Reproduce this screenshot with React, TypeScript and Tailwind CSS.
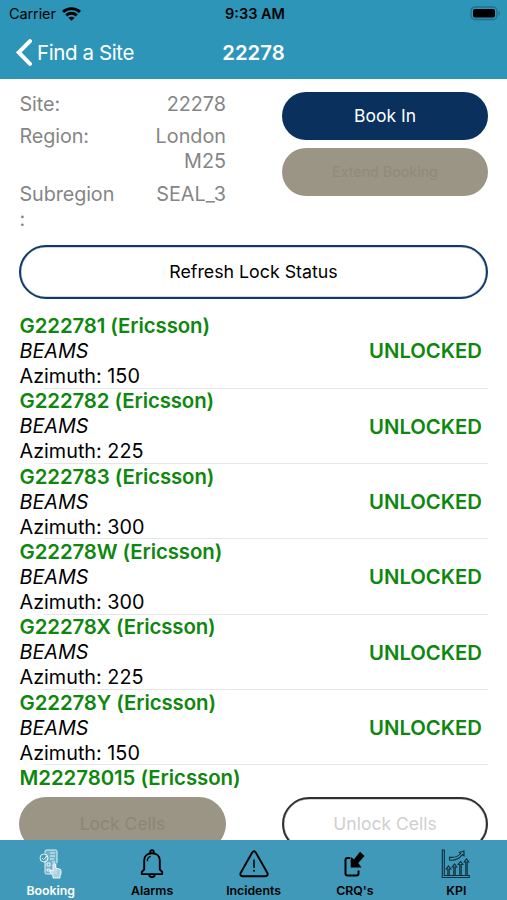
import { ReactNode } from "react";

interface Cell {
  id: string;
  azimuth: number;
}

interface TabProps {
  label: string;
  active?: boolean;
  children: ReactNode;
}

const CELLS: Cell[] = [
  { id: "G222781", azimuth: 150 },
  { id: "G222782", azimuth: 225 },
  { id: "G222783", azimuth: 300 },
  { id: "G22278W", azimuth: 300 },
  { id: "G22278X", azimuth: 225 },
  { id: "G22278Y", azimuth: 150 },
];

function StatusBar() {
  return (
    <div className="grid h-[27px] grid-cols-3 items-center pl-[9px] pr-[6px] text-black">
      <div className="flex items-center gap-[6px]">
        <span className="text-[14.5px] tracking-[-0.1px]">Carrier</span>
        <svg width="19" height="14" viewBox="0 0 19 14" fill="none" stroke="currentColor" strokeWidth="2.9">
          <path d="M1 4.9C5.7.5 13.3.5 18 4.9" />
          <path d="M4.2 8.4c3-2.8 7.6-2.8 10.6 0" />
          <path d="M9.5 13.7 6.4 10.8c1.7-1.5 4.5-1.5 6.2 0Z" fill="currentColor" stroke="none" />
        </svg>
      </div>
      <span className="text-center text-[14.5px] font-semibold">9:33 AM</span>
      <svg className="justify-self-end" width="31" height="15" viewBox="0 0 31 15">
        <rect x="1" y="1" width="26" height="12.5" rx="4" fill="none" stroke="#217087" strokeWidth="1.3" />
        <rect x="3" y="3" width="22" height="8.5" rx="2" />
        <path d="M28.6 5v4.5c2-.7 2-3.8 0-4.5Z" fill="#217087" />
      </svg>
    </div>
  );
}

function Header() {
  return (
    <header className="h-[79px] shrink-0 bg-[#2d95b8]">
      <StatusBar />
      <div className="grid h-[51px] grid-cols-3 items-center text-white">
        <button className="flex items-center gap-[5px] whitespace-nowrap pl-4 text-[20.5px] tracking-[-0.4px]">
          <svg width="16" height="27" viewBox="0 0 16 27" fill="none" stroke="currentColor" strokeWidth="4">
            <path d="M14 2.2 2.8 13.4 14 24.8" strokeLinecap="round" />
          </svg>
          <span className="pt-px">Find a Site</span>
        </button>
        <h1 className="pt-px text-center text-[20.3px] font-semibold">22278</h1>
      </div>
    </header>
  );
}

function InfoRow({ label, value }: { label: string; value: string }) {
  return (
    <div className="mb-[7.5px] flex justify-between leading-[24.9px]">
      <span className="w-[98px] break-words tracking-[-0.1px]">{label}</span>
      <span className="w-[80px] text-right">{value}</span>
    </div>
  );
}

function CellRow({ cell }: { cell: Cell }) {
  return (
    <div className="flex h-[75.35px] flex-col">
      <div className="flex h-[74.35px] shrink-0 items-center justify-between pl-[0.5px] pr-[6px] pt-px leading-[25.1px]">
        <div>
          <div className="pb-px text-[20.4px] font-semibold tracking-[-0.1px] text-[#0f870f]">{cell.id} (Ericsson)</div>
          <div className="italic">BEAMS</div>
          <div>Azimuth: {cell.azimuth}</div>
        </div>
        <span className="text-[20.3px] font-semibold text-[#0f870f]">UNLOCKED</span>
      </div>
      <div className="ml-[25px] h-px shrink-0 bg-[#e6e6e6]" />
    </div>
  );
}

function Tab({ label, active, children }: TabProps) {
  return (
    <button className={`flex flex-1 flex-col items-center pt-2 ${active ? "text-white" : "text-black"}`}>
      <span className="flex h-8 items-center justify-center">{children}</span>
      <span className="mt-[3px] text-[12.3px] font-semibold leading-4">{label}</span>
    </button>
  );
}

function BookingIcon() {
  return (
    <svg width="24" height="30" viewBox="0 0 24 30" fill="none" stroke="currentColor" strokeWidth="1" strokeOpacity=".85">
      <path d="M6 4V2.5Q6 1 7.5 1h9Q18 1 18 2.5V14M6 12v11.5Q6 25 7.5 25H12" />
      <path d="M6 4V2.5Q6 1 7.5 1h9Q18 1 18 2.5V25H6V12Z" fill="currentColor" fillOpacity=".25" stroke="none" />
      <circle cx="5" cy="9" r="4" />
      <path d="m3 9 1.5 1.7L8 7M11 4h5M11 7h5M11 10h4M8 14h3v3H8zM8 20h3v2H8zM13 13h3" />
      <path d="M14 22v-6q0-1.5 1.3-1.5t1.2 1.5v3l4.5 1.2q1 .3 1 1.5V25l-1 2v2h-7v-2l-3-4 .7-2Z" fill="currentColor" fillOpacity=".55" />
    </svg>
  );
}

function BellIcon() {
  return (
    <svg width="24" height="30" viewBox="0 0 24 30" fill="none" stroke="currentColor" strokeWidth="1.9" strokeLinejoin="round">
      <path d="M10.3 4.2V2.8a1.7 1.7 0 0 1 3.4 0v1.4" />
      <path d="M4.2 20.5v-9.2C4.2 7 7.5 4.3 12 4.3s7.8 2.7 7.8 7v9.2l2.4 2.4v2.2H1.8v-2.2Z" />
      <path d="M7.3 12.2c0-2.5 1.2-4.2 3.4-4.8" strokeWidth="1.4" />
      <path d="M9.2 25.5c.3 3.6 5.3 3.6 5.6 0" />
    </svg>
  );
}

function WarningIcon() {
  return (
    <svg width="30" height="28" viewBox="0 0 30 28" fill="none" stroke="currentColor" strokeWidth="1.9" strokeLinejoin="round">
      <path d="M13.2 2.5q1.8-2.5 3.6 0L28.4 23q1 3-2 3.3H3.6q-3-.3-2-3.3Z" />
      <path d="M15 9.5v8.5" strokeWidth="1.5" />
      <circle cx="15" cy="20.8" r="1" fill="currentColor" stroke="none" />
    </svg>
  );
}

function ImportIcon() {
  return (
    <svg width="21" height="26" viewBox="0 0 21 26" fill="none" stroke="currentColor" strokeWidth="2">
      <path d="M6 7H3.5Q1.5 7 1.5 9v13.5q0 2 2 2h9q2 0 2-2v-3" />
      <path d="m16 .8 4.5 4.3-6.2 7 3.2 4.4H6.7V6l3.4 2.3Z" fill="currentColor" stroke="none" />
    </svg>
  );
}

function ChartIcon() {
  return (
    <svg width="30" height="30" viewBox="0 0 30 30" fill="none" stroke="#102f39" strokeWidth="1.1">
      <path d="M1.3 1h2v25.5h25v2h-27Z" />
      <path d="M6.8 26v-6H5.2l2.3-3 2.3 3H8.2v6M12.8 26v-8h-1.6l2.3-3 2.3 3h-1.6v8M18.8 26V15.5h-1.6l2.3-3 2.3 3h-1.6V26M24.8 26V13h-1.6l2.3-3 2.3 3h-1.6v13" />
      <path d="M8.5 8.2q7 1.1 11.2-3.7l-1.2-1L23 2v4.8L21.5 5.6Q16 12.3 8.5 11Z" />
    </svg>
  );
}

export default function App() {
  return (
    <div className="flex h-[900px] w-[507px] flex-col overflow-hidden bg-white font-['Inter','Liberation_Sans',sans-serif] text-[19.8px] text-black">
      <Header />
      <main className="flex min-h-0 flex-1 flex-col overflow-hidden px-[19px]">
        <section className="flex h-[166px] shrink-0 justify-between pt-[13px]">
          <div className="w-[207px] pl-[0.5px] text-[#858585]">
            <InfoRow label="Site:" value="22278" />
            <InfoRow label="Region:" value="London M25" />
            <InfoRow label="Subregion :" value="SEAL_3" />
          </div>
          <div className="flex w-[206px] flex-col gap-2">
            <button className="h-[48px] rounded-full bg-[#0a305e] text-[17.5px] text-white">Book In</button>
            <button className="h-[48px] rounded-full bg-[#9b9585] text-[14.3px] text-[#8f8a7b]">Extend Booking</button>
          </div>
        </section>
        <button className="h-[54px] shrink-0 rounded-full border-2 border-[#12396b] text-[17.8px] shadow-[inset_0_0_0_0.5px_#12396b66]">
          Refresh Lock Status
        </button>
        <section className="h-[494px] shrink-0 pt-[14.3px]">
          {CELLS.map((cell) => (
            <CellRow key={cell.id} cell={cell} />
          ))}
          <div className="pl-[0.5px] text-[20.4px] font-semibold leading-[25px] tracking-[-0.05px] text-[#0f870f]">
            M22278015 (Ericsson)
          </div>
        </section>
        <div className="mt-1 flex shrink-0 justify-between text-[17.5px]">
          <button className="h-[54px] w-[207px] rounded-full bg-[#9b9585] text-[#8b8678]">Lock Cells</button>
          <button className="h-[54px] w-[206px] rounded-full border-2 border-[#303033] text-[#cfcfcf] shadow-[inset_0_0_0_0.5px_#30303366]">
            Unlock Cells
          </button>
        </div>
      </main>
      <nav className="flex h-[60px] shrink-0 bg-[#4199b9]">
        <Tab label="Booking" active>
          <BookingIcon />
        </Tab>
        <Tab label="Alarms">
          <BellIcon />
        </Tab>
        <Tab label="Incidents">
          <WarningIcon />
        </Tab>
        <Tab label="CRQ's">
          <ImportIcon />
        </Tab>
        <Tab label="KPI">
          <ChartIcon />
        </Tab>
      </nav>
    </div>
  );
}
